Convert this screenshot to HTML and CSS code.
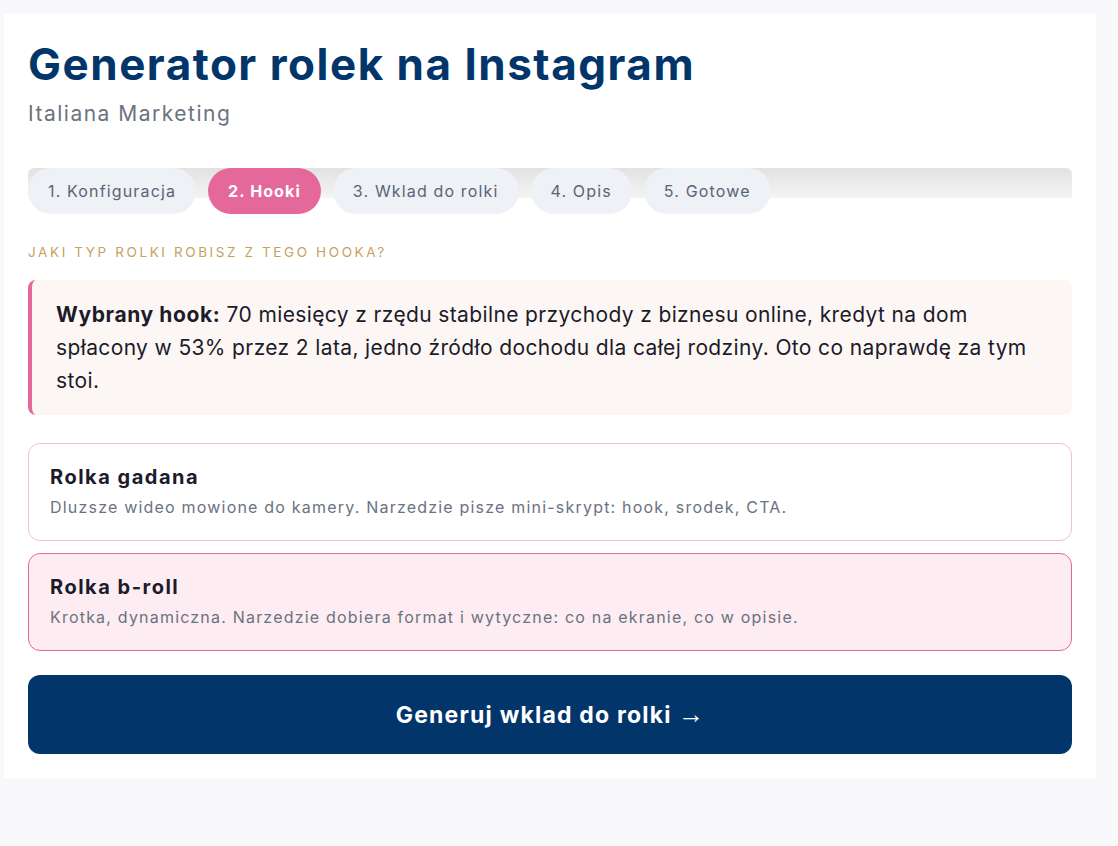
FILE: index.html
```html
<!DOCTYPE html>
<html lang="pl">
<head>
<meta charset="utf-8">
<title>Generator rolek na Instagram</title>
<link rel="stylesheet" href="styles.css">
</head>
<body>
<main class="card">
  <h1 class="title">Generator rolek na Instagram</h1>
  <p class="subtitle">Italiana Marketing</p>

  <nav class="steps">
    <span class="step">1. Konfiguracja</span>
    <span class="step step-active">2. Hooki</span>
    <span class="step">3. Wklad do rolki</span>
    <span class="step">4. Opis</span>
    <span class="step">5. Gotowe</span>
  </nav>

  <p class="label">Jaki typ rolki robisz z tego hooka?</p>

  <div class="hook">
    <strong>Wybrany hook:</strong> 70 miesięcy z rzędu stabilne przychody z biznesu online, kredyt na dom spłacony w 53% przez 2 lata, jedno źródło dochodu dla całej rodziny. Oto co naprawdę za tym stoi.
  </div>

  <div class="option">
    <div class="option-title">Rolka gadana</div>
    <div class="option-desc">Dluzsze wideo mowione do kamery. Narzedzie pisze mini-skrypt: hook, srodek, CTA.</div>
  </div>

  <div class="option option-selected">
    <div class="option-title">Rolka b-roll</div>
    <div class="option-desc">Krotka, dynamiczna. Narzedzie dobiera format i wytyczne: co na ekranie, co w opisie.</div>
  </div>

  <button class="cta">Generuj wklad do rolki <span class="cta-arrow">→</span></button>
</main>
</body>
</html>
```

FILE: styles.css
```css
* { box-sizing: border-box; }

html, body {
  margin: 0;
  background: #f9f9fb;
}

body {
  padding: 14px 22px 68px 4px;
  font-family: "Inter", "Noto Sans", sans-serif;
  color: #1c1b2b;
}

.card {
  background: #ffffff;
  padding: 24px 24px 24px 24px;
  display: flex;
  flex-direction: column;
}

.title {
  margin: 0;
  font-size: 44px;
  line-height: 52px;
  font-weight: 700;
  color: #02366b;
  letter-spacing: 1.5px;
}

.subtitle {
  margin: 10px 0 0;
  font-size: 21px;
  line-height: 28px;
  letter-spacing: 1.5px;
  color: #6b7280;
}

.steps {
  margin-top: 40px;
  display: flex;
  gap: 12px;
  background-image: linear-gradient(#e2e2e2, #f4f4f4);
  background-size: 100% 30px;
  background-repeat: no-repeat;
  border-radius: 6px;
}

.step {
  height: 46px;
  padding: 0 20px;
  display: flex;
  align-items: center;
  border-radius: 23px;
  background: #eef1f5;
  color: #5b6474;
  font-size: 16px;
  letter-spacing: 1.15px;
}

.step-active {
  background: #e5689a;
  color: #ffffff;
  font-weight: 700;
  letter-spacing: 1.1px;
}

.label {
  margin: 30px 0 0;
  font-size: 13.5px;
  line-height: 16px;
  letter-spacing: 2.6px;
  text-transform: uppercase;
  color: #c9a15e;
}

.hook {
  margin-top: 20px;
  background: #fcf7f4;
  border-left: 4px solid #e5689a;
  border-radius: 8px;
  padding: 18px 10px 18px 24px;
  font-size: 21px;
  line-height: 33px;
  letter-spacing: 0.37px;
  color: #1c1b2b;
}

.hook strong { font-weight: 700; letter-spacing: 0.6px; }

.option {
  margin-top: 28px;
  border: 1px solid #f1bfcd;
  border-radius: 12px;
  background: #ffffff;
  padding: 20px 21px 21px;
}

.option + .option { margin-top: 12px; }

.option-selected {
  background: #fdedf2;
  border-color: #e5689a;
}

.option-title {
  font-size: 20px;
  line-height: 26px;
  font-weight: 700;
  letter-spacing: 1.5px;
  color: #1c1b2b;
}

.option-desc {
  margin-top: 5px;
  font-size: 16px;
  line-height: 24px;
  letter-spacing: 1.2px;
  color: #6b7280;
}

.cta {
  margin-top: 24px;
  height: 79px;
  border: 0;
  border-radius: 12px;
  background: #02366b;
  color: #ffffff;
  font-family: inherit;
  font-size: 23px;
  font-weight: 700;
  letter-spacing: 1.2px;
  cursor: pointer;
}

.cta-arrow {
  font-family: "Liberation Sans", sans-serif;
  font-size: 26px;
  font-weight: 400;
  letter-spacing: 0;
}
```
